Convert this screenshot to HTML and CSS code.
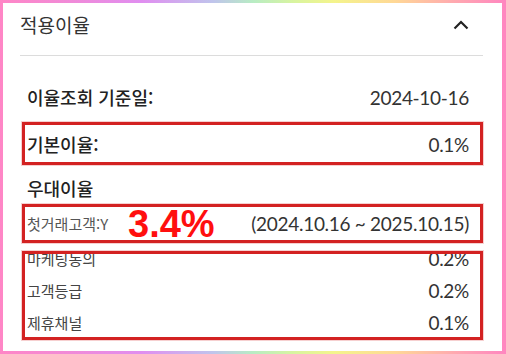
FILE: index.html
```html
<!DOCTYPE html>
<html lang="ko">
<head>
<meta charset="utf-8">
<link rel="stylesheet" href="styles.css">
</head>
<body>
<div class="frame">
  <div class="card">
    <div class="header">
      <span class="title">적용이율</span>
      <svg class="chevron" width="16" height="11" viewBox="0 0 16 11"><polyline points="1.5,9.5 8,3 14.5,9.5" fill="none" stroke="#222" stroke-width="2.2"/></svg>
    </div>
    <div class="divider"></div>
    <div class="body">
      <div class="row row-date"><span class="label strong">이율조회 기준일:</span><span class="value">2024-10-16</span></div>
      <div class="row row-base"><span class="label strong">기본이율:</span><span class="value">0.1%</span></div>
      <div class="row row-head"><span class="label strong">우대이율</span></div>
      <div class="row row-first"><span class="label sub">첫거래고객:Y</span><span class="value">(2024.10.16 ~ 2025.10.15)</span></div>
      <div class="row row-item first-item"><span class="label item">마케팅동의</span><span class="value">0.2%</span></div>
      <div class="row row-item"><span class="label item">고객등급</span><span class="value">0.2%</span></div>
      <div class="row row-item"><span class="label item">제휴채널</span><span class="value">0.1%</span></div>
    </div>
    <div class="mark mark-base"></div>
    <div class="mark mark-first"></div>
    <div class="mark mark-items"></div>
    <div class="big-rate">3.4%</div>
  </div>
</div>
</body>
</html>
```
FILE: styles.css
```css
html, body {
  margin: 0;
  padding: 0;
}
body {
  width: 506px;
  height: 354px;
  overflow: hidden;
  font-family: "Noto Sans CJK KR", sans-serif;
}
.frame {
  box-sizing: border-box;
  width: 506px;
  height: 354px;
  padding: 3px 4px 3px 3px;
  background: linear-gradient(to right, #ff86c6 0%, #f08ad8 14%, #e08ef0 28%, #c0c4ec 42%, #b8ecc4 50%, #d8f4a0 58%, #f4f48c 66%, #ffd896 78%, #ffa8b0 90%, #ff86c0 100%);
}
.card {
  position: relative;
  box-sizing: border-box;
  height: 100%;
  background: #fff;
  padding: 0 19px 0 17px;
}
.header {
  height: 42px;
  display: flex;
  align-items: center;
  justify-content: space-between;
}
.title {
  font-size: 19px;
  color: #333;
  line-height: 1;
}
.chevron {
  margin-right: 14px;
  margin-top: 1px;
}
.divider {
  margin-top: 10px;
  height: 1px;
  background: #dcdcdc;
}
.body {
  padding: 0 14px 0 7px;
}
.row {
  display: flex;
  align-items: center;
  justify-content: space-between;
}
.row-date { margin-top: 21px; height: 40px; }
.row-base { margin-top: 7px; height: 40px; }
.row-head { margin-top: 4px; height: 39px; }
.row-first { height: 33px; }
.row-item { height: 32px; }
.first-item { margin-top: 2px; }
.label {
  line-height: 1;
}
.strong {
  font-size: 18px;
  font-weight: 500;
  color: #222;
}
.sub {
  font-size: 15px;
  color: #555;
}
.item {
  font-size: 15px;
  color: #444;
}
.value {
  font-family: Lato, "Noto Sans CJK KR", sans-serif;
  font-size: 19px;
  letter-spacing: -0.3px;
  color: #333;
  line-height: 1;
}
.mark {
  position: absolute;
  left: 19px;
  width: 461px;
  box-sizing: border-box;
  border: 3px solid #d32222;
  box-shadow: 0 0 0 1px rgba(235, 150, 150, 0.45);
}
.mark-base { top: 119px; height: 43px; }
.mark-first { top: 201px; height: 39px; }
.mark-items { top: 248px; height: 89px; }
.big-rate {
  position: absolute;
  left: 125px;
  top: 202px;
  font-family: "Liberation Sans", Arial, sans-serif;
  font-weight: 700;
  font-size: 38px;
  line-height: 1;
  color: #ff0f0f;
  text-shadow: 1px 0 0 #fff, -1px 0 0 #fff, 0 1px 0 #fff, 0 -1px 0 #fff;
}
```
